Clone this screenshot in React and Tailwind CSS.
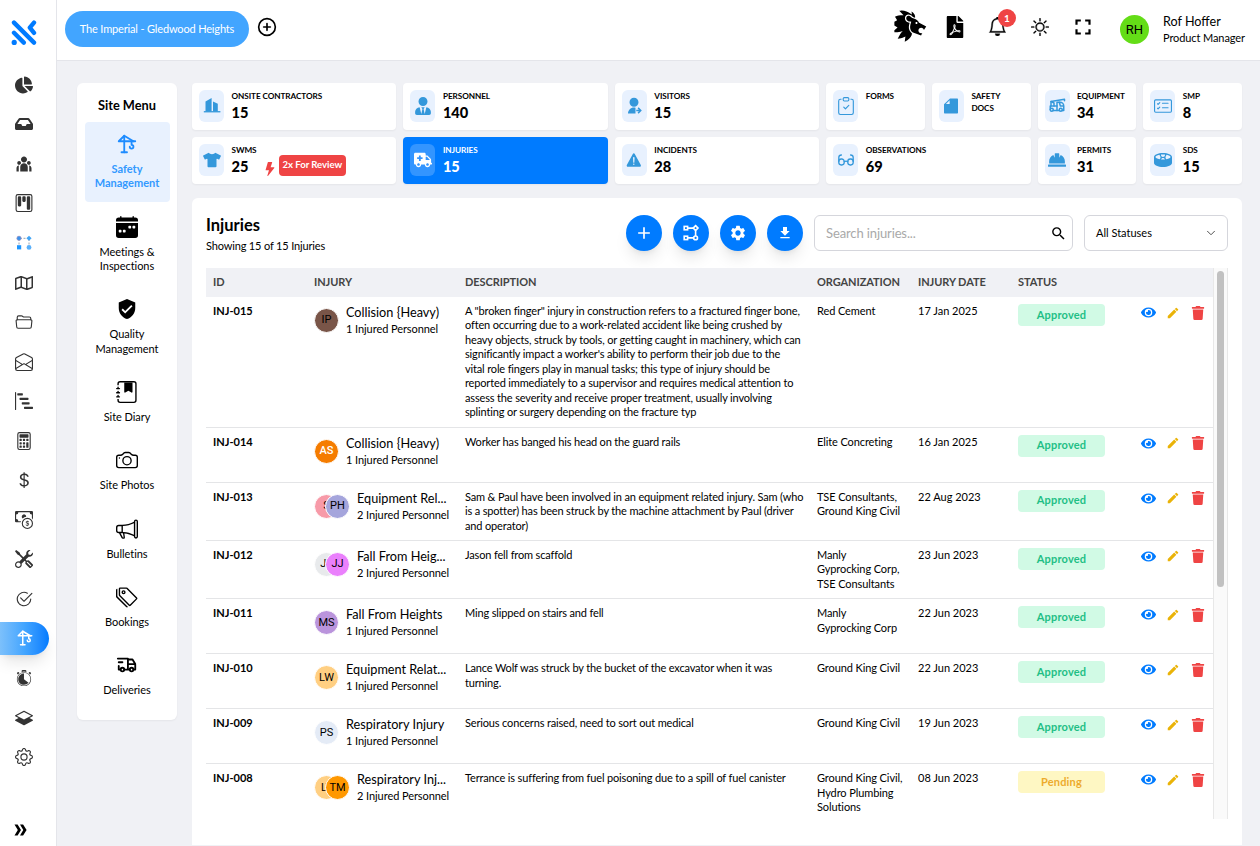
import {
  BsBell,
  BsBarChartSteps,
  BsCalculator,
  BsCalendarWeekFill,
  BsCamera,
  BsCardChecklist,
  BsCashCoin,
  BsCheck2Circle,
  BsClipboardCheck,
  BsCurrencyDollar,
  BsEnvelopeOpen,
  BsGear,
  BsJournalBookmarkFill,
  BsKanban,
  BsLayersHalf,
  BsLightningFill,
  BsMegaphone,
  BsSun,
  BsTags,
  BsTools,
} from "react-icons/bs";
import {
  FaAmbulance,
  FaChartPie,
  FaDrumSteelpan,
  FaEye,
  FaFilePdf,
  FaHardHat,
  FaInbox,
  FaRegMap,
  FaTrash,
  FaTshirt,
  FaUserTie,
} from "react-icons/fa";
import { FiChevronDown, FiPlusCircle } from "react-icons/fi";
import { GiLion, GiStopwatch } from "react-icons/gi";
import { IoFolderOpenOutline, IoWarning } from "react-icons/io5";
import { MdAdd, MdDownload, MdEdit, MdFullscreen, MdSearch, MdSettings, MdVerifiedUser } from "react-icons/md";
import { RiTeamFill, RiUserSharedFill } from "react-icons/ri";
import { TbCarCrane, TbCrane, TbTruckDelivery } from "react-icons/tb";

const Logo = () => (
  <svg width="26" height="26" viewBox="0 0 26 26" fill="none" stroke="#007bff" strokeWidth="4.4" strokeLinecap="round">
    <path d="M3 2.6 L23 22.6" />
    <path d="M3 12.8 L12.8 22.6" />
    <path d="M23 2.6 L18.8 7.6 L23 12.8" strokeLinejoin="round" />
    <path d="M3.2 22.4 L3.21 22.4" strokeWidth="5.2" />
  </svg>
);

const FlowDots = ({ size = 18 }) => (
  <svg width={size} height={size} viewBox="0 0 18 18">
    <path d="M4 5v8M14 5v8M5 4.3h8" stroke="#9aa0aa" strokeWidth="1" strokeDasharray="2 1.5" />
    <circle cx="4" cy="4.3" r="2.2" fill="#3c92ea" stroke="#b98fb4" strokeWidth="0.5" />
    <path d="M14 1.8l2.6 2.5L14 6.8l-2.6-2.5z" fill="#42a5f5" />
    <rect x="2" y="11.2" width="4.2" height="4.2" fill="#1e96ff" />
    <circle cx="14" cy="13.4" r="2.4" fill="#5ab0fa" />
  </svg>
);

const Buildings = ({ size = 18 }) => (
  <svg width={size} height={size} viewBox="0 0 18 18" fill="currentColor">
    <path d="M2.5 4.4 8.6 1V14.6H2.5z" />
    <path d="M10 4.6 14.8 6.8V14.6H10z" />
    <path d="M0.8 14.1h16.6v1.3H0.8z" />
  </svg>
);

const FoldedDoc = ({ size = 18 }) => (
  <svg width={size} height={size} viewBox="0 0 18 18" fill="currentColor">
    <path d="M8 1.4h7c.6 0 1 .4 1 1v13.2c0 .6-.4 1-1 1H3c-.6 0-1-.4-1-1V7.2z" />
    <path d="M3.9 6.9 7.6 3.2v3.7z" fill="#eaf2fe" />
  </svg>
);

const Glasses = ({ size = 18 }) => (
  <svg width={size} height={size} viewBox="0 0 18 18" fill="none" stroke="currentColor" strokeWidth="1.3" strokeLinecap="round">
    <rect x="1.8" y="8" width="5.4" height="6" rx="2.4" />
    <rect x="10.8" y="8" width="5.4" height="6" rx="2.4" />
    <path d="M7.2 10.6q1.8-1 3.6 0" />
    <path d="M1.8 10.6V6.4q0-2.4 2.6-2.4M16.2 10.6V6.4q0-2.4-2.6-2.4" />
  </svg>
);

const FlowNodes = ({ size = 18 }) => (
  <svg width={size} height={size} viewBox="0 0 18 18" fill="none" stroke="currentColor" strokeWidth="1.6">
    <rect x="2.2" y="2.4" width="3.4" height="3.4" />
    <path d="M13.6 1.6 16 4.1l-2.4 2.4-2.4-2.4z" />
    <rect x="2.2" y="12.2" width="3.4" height="3.4" />
    <circle cx="13.6" cy="13.9" r="1.9" />
    <path d="M5.6 4.1h5.6M13.6 6.5V12M5.6 13.9h6" />
  </svg>
);

const DoubleChevron = () => (
  <svg width="13" height="12" viewBox="0 0 13 12" fill="currentColor">
    <path d="M0.5 0.5H3.6L7 6 3.6 11.5H0.5L3.8 6z" />
    <path d="M6 0.5H9.1L12.6 6 9.1 11.5H6L9.3 6z" />
  </svg>
);

const railIcons = [
  FaChartPie,
  FaInbox,
  RiTeamFill,
  BsKanban,
  FlowDots,
  FaRegMap,
  IoFolderOpenOutline,
  BsEnvelopeOpen,
  BsBarChartSteps,
  BsCalculator,
  BsCurrencyDollar,
  BsCashCoin,
  BsTools,
  BsCheck2Circle,
  TbCrane,
  GiStopwatch,
  BsLayersHalf,
  BsGear,
];

const siteMenu = [
  { label: "Safety Management", icon: TbCrane, active: true },
  { label: "Meetings & Inspections", icon: BsCalendarWeekFill },
  { label: "Quality Management", icon: MdVerifiedUser },
  { label: "Site Diary", icon: BsJournalBookmarkFill },
  { label: "Site Photos", icon: BsCamera },
  { label: "Bulletins", icon: BsMegaphone },
  { label: "Bookings", icon: BsTags },
  { label: "Deliveries", icon: TbTruckDelivery },
];

const stats = [
  { label: "Onsite Contractors", value: 15, icon: Buildings, wide: true },
  { label: "Personnel", value: 140, icon: FaUserTie, wide: true },
  { label: "Visitors", value: 15, icon: RiUserSharedFill, wide: true },
  { label: "Forms", icon: BsClipboardCheck },
  { label: "Safety Docs", icon: FoldedDoc },
  { label: "Equipment", value: 34, icon: TbCarCrane },
  { label: "SMP", value: 8, icon: BsCardChecklist },
  { label: "SWMS", value: 25, icon: FaTshirt, wide: true, review: "2x For Review" },
  { label: "Injuries", value: 15, icon: FaAmbulance, wide: true, active: true },
  { label: "Incidents", value: 28, icon: IoWarning, wide: true },
  { label: "Observations", value: 69, icon: Glasses, wide: true },
  { label: "Permits", value: 31, icon: FaHardHat },
  { label: "SDS", value: 15, icon: FaDrumSteelpan },
];

const injuries = [
  {
    id: "INJ-015",
    name: "Collision {Heavy)",
    people: [["IP", "bg-[#795548] text-black"]],
    description: `A "broken finger" injury in construction refers to a fractured finger bone,
often occurring due to a work-related accident like being crushed by
heavy objects, struck by tools, or getting caught in machinery, which can
significantly impact a worker's ability to perform their job due to the
vital role fingers play in manual tasks; this type of injury should be
reported immediately to a supervisor and requires medical attention to
assess the severity and receive proper treatment, usually involving
splinting or surgery depending on the fracture typ`,
    org: "Red Cement",
    date: "17 Jan 2025",
    status: "Approved",
  },
  {
    id: "INJ-014",
    name: "Collision {Heavy)",
    people: [["AS", "bg-[#f57c00] font-medium text-white"]],
    description: "Worker has banged his head on the guard rails",
    org: "Elite Concreting",
    date: "16 Jan 2025",
    status: "Approved",
  },
  {
    id: "INJ-013",
    name: "Equipment Rel...",
    people: [["S", "bg-[#f79aa8] text-black"], ["PH", "bg-[#a5a5dc] text-black"]],
    description: `Sam & Paul have been involved in an equipment related injury. Sam (who
is a spotter) has been struck by the machine attachment by Paul (driver
and operator)`,
    org: "TSE Consultants,\nGround King Civil",
    date: "22 Aug 2023",
    status: "Approved",
  },
  {
    id: "INJ-012",
    name: "Fall From Heig...",
    people: [["JT", "bg-[#e8eaec] text-black"], ["JJ", "bg-[#ea80fc] text-black"]],
    description: "Jason fell from scaffold",
    org: "Manly\nGyprocking Corp,\nTSE Consultants",
    date: "23 Jun 2023",
    status: "Approved",
  },
  {
    id: "INJ-011",
    name: "Fall From Heights",
    people: [["MS", "bg-[#ba94dc] text-black"]],
    description: "Ming slipped on stairs and fell",
    org: "Manly\nGyprocking Corp",
    date: "22 Jun 2023",
    status: "Approved",
  },
  {
    id: "INJ-010",
    name: "Equipment Relat...",
    people: [["LW", "bg-[#ffcf82] text-black"]],
    description: "Lance Wolf was struck by the bucket of the excavator when it was\nturning.",
    org: "Ground King Civil",
    date: "22 Jun 2023",
    status: "Approved",
  },
  {
    id: "INJ-009",
    name: "Respiratory Injury",
    people: [["PS", "bg-[#e4ebf6] text-black"]],
    description: "Serious concerns raised, need to sort out medical",
    org: "Ground King Civil",
    date: "19 Jun 2023",
    status: "Approved",
  },
  {
    id: "INJ-008",
    name: "Respiratory Inj...",
    people: [["LT", "bg-[#ffcf82] text-black"], ["TM", "bg-[#ff9800] text-black"]],
    description: "Terrance is suffering from fuel poisoning due to a spill of fuel canister",
    org: "Ground King Civil,\nHydro Plumbing\nSolutions",
    date: "08 Jun 2023",
    status: "Pending",
  },
];

const columns = "grid grid-cols-[101px_151px_352px_101px_100px_202px]";

function Rail() {
  return (
    <aside className="flex w-[57px] shrink-0 flex-col border-r border-[#e4e5ea] bg-white">
      <div className="mt-5 ml-[11px] h-[45px]">
        <Logo />
      </div>
      <nav className="flex flex-col">
        {railIcons.map((Icon, i) =>
          Icon === TbCrane ? (
            <a key={i} className="flex h-[39.55px] items-center">
              <span className="flex h-[33px] w-[49px] items-center justify-center rounded-r-full bg-linear-to-r from-[#7cc0fb] via-[#42a5ff] to-[#007bff] text-white shadow-lg shadow-black/10">
                <Icon size={18} />
              </span>
            </a>
          ) : (
            <a key={i} className="flex h-[39.55px] w-12 items-center justify-center text-[#333]">
              <Icon size={18} />
            </a>
          )
        )}
      </nav>
      <button className="mt-auto mb-[10px] ml-[14px]">
        <DoubleChevron />
      </button>
    </aside>
  );
}

function Header() {
  return (
    <header className="flex h-[61px] shrink-0 items-start border-b border-[#e4e5ea] bg-white pl-2">
      <button className="mt-[11px] h-9 w-[184px] rounded-full bg-[#42a5ff] text-[11px] tracking-[-0.16px] text-white">
        The Imperial - Gledwood Heights
      </button>
      <FiPlusCircle size={20} className="mt-[17px] ml-2" />
      <div className="ml-auto flex h-[53px] items-center pr-[14px]">
        <GiLion size={35} />
        <FaFilePdf size={22} className="mr-[-3px] ml-[16px]" />
        <div className="relative ml-[25px]">
          <BsBell size={19} strokeWidth={0.3} />
          <span className="absolute -top-[8px] left-[10px] flex size-[18px] items-center justify-center rounded-full bg-[#ef4444] text-[10px] font-bold text-white">
            1
          </span>
        </div>
        <BsSun size={18} strokeWidth={0.3} className="ml-[24px]" />
        <MdFullscreen size={26} className="ml-[21px]" />
        <div className="mt-[6px] ml-[24px] flex size-[29px] items-center justify-center rounded-full bg-[#64dd17] font-[Roboto] text-[13px]">
          RH
        </div>
        <div className="mt-[6px] ml-[14px] w-[83px] whitespace-nowrap">
          <p className="text-[12.6px] leading-[17px]">Rof Hoffer</p>
          <p className="text-[11px] leading-[16px] tracking-[-0.1px]">Product Manager</p>
        </div>
      </div>
    </header>
  );
}

function SiteMenu() {
  return (
    <section className="flex h-[637px] w-[100px] shrink-0 flex-col rounded-md bg-white px-[7.5px] pt-[14px] shadow-xs">
      <h2 className="mb-2 text-center text-[12.8px] leading-[17px] font-bold">Site Menu</h2>
      <div className="flex flex-col gap-[2.9px]">
        {siteMenu.map(({ label, icon: Icon, active }) => (
          <a
            key={label}
            className={`flex flex-col items-center rounded py-[11px] text-center text-[11px] leading-[14.4px] ${
              active ? "bg-[#e8f1fe] font-bold text-[#3399ff]" : "tracking-[-0.05px]"
            }`}
          >
            <Icon size={22} className={active ? "text-[#1e8cff]" : "text-black"} />
            <span className="mt-[7px] w-[76px]">{label}</span>
          </a>
        ))}
      </div>
    </section>
  );
}

function StatCard({ label, value, icon: Icon, wide, active, review }) {
  return (
    <div
      className={`flex h-[47px] rounded p-[7px] shadow-xs ${wide ? "col-span-2" : ""} ${
        active ? "bg-[#007bff] text-white" : "bg-white"
      }`}
    >
      <div
        className={`flex h-8 w-[25px] shrink-0 items-center justify-center rounded-md ${
          active ? "bg-[#3395ff] text-white" : "bg-[#e8f1fe] text-[#3498db]"
        }`}
      >
        <Icon size={18} />
      </div>
      <div className="ml-[7.5px]">
        <p className="text-[8.2px] leading-[12px] font-bold tracking-[-0.07px] uppercase">{label}</p>
        {value && <p className="mt-[2px] text-[14.6px] leading-[18px] font-black">{value}</p>}
      </div>
      {review && (
        <div className="mt-[11px] ml-[4px] flex items-start">
          <BsLightningFill size={14} className="mt-[7px] mr-[2px] ml-[2px] text-[#ef4444]" />
          <span className="flex h-[21px] items-center rounded bg-[#ef4444] px-1 text-[9.6px] font-bold tracking-[-0.05px] whitespace-nowrap text-white">
            {review}
          </span>
        </div>
      )}
    </div>
  );
}

function Toolbar() {
  return (
    <div className="flex h-9 items-center">
      <div>
        <h1 className="mt-[3px] text-[16.5px] leading-[20px] font-bold">Injuries</h1>
        <p className="mt-[2px] text-[11px] leading-[17px] tracking-[-0.16px]">Showing 15 of 15 Injuries</p>
      </div>
      <div className="ml-auto flex gap-[11px]">
        {[MdAdd, FlowNodes, MdSettings, MdDownload].map((Icon, i) => (
          <button
            key={i}
            className="flex size-9 items-center justify-center rounded-full bg-[#007bff] text-white shadow-lg shadow-black/10"
          >
            <Icon size={i === 0 ? 20 : i === 3 ? 16 : 18} />
          </button>
        ))}
      </div>
      <div className="ml-[11px] flex h-9 w-[259px] items-center rounded-md border border-[#d5d6dc] pr-[5px] pl-[11px]">
        <input
          placeholder="Search injuries..."
          className="w-full pt-px text-[13px] tracking-[-0.12px] outline-none placeholder:text-[#a9a9a9]"
        />
        <MdSearch size={17} className="shrink-0" />
      </div>
      <div className="ml-[11px] flex h-9 w-[144px] items-center justify-between rounded-md border border-[#d5d6dc] pr-[9px] pl-[11px] text-[11px]">
        All Statuses
        <FiChevronDown size={14} strokeWidth={1.6} className="text-[#444]" />
      </div>
    </div>
  );
}

function InjuryRow({ id, name, people, description, org, date, status }) {
  return (
    <div className={`${columns} min-h-[55px] border-b border-[#e4e5e7] text-[11px] leading-[14.45px] *:px-[7px] *:pt-[7px]`}>
      <div className="font-bold">{id}</div>
      <div className="flex items-start">
        <div className="mt-[4px] flex">
          {people.map(([initials, color], i) => (
            <span
              key={initials}
              className={`flex size-[25px] shrink-0 items-center justify-center rounded-full border border-white font-[Roboto] text-[11px] ${color} ${
                i > 0 ? "-ml-[14px]" : ""
              }`}
            >
              {initials}
            </span>
          ))}
        </div>
        <div className="ml-[7px] whitespace-nowrap">
          <p className="text-[12.7px] leading-[17px]">{name}</p>
          <p className="text-[11px] leading-[16px] tracking-[-0.07px]">{people.length} Injured Personnel</p>
        </div>
      </div>
      <div className="pb-[7px] tracking-[-0.155px] whitespace-pre">{description}</div>
      <div className="pb-[7px] tracking-[-0.1px] whitespace-pre">{org}</div>
      <div>{date}</div>
      <div className="flex items-start">
        <span
          className={`flex h-[22px] w-[87px] items-center justify-center rounded font-bold tracking-[0.2px] ${
            status === "Approved" ? "bg-[#d1fae5] text-[#1fbf85]" : "bg-[#fef7c3] text-[#edab2d]"
          }`}
        >
          {status}
        </span>
        <div className="mt-px mr-px ml-auto flex items-center">
          <FaEye size={15} className="mr-[10px] text-[#007bff]" />
          <MdEdit size={14} className="mr-[11px] text-[#eab308]" />
          <FaTrash size={14} className="text-[#ef4444]" />
        </div>
      </div>
    </div>
  );
}

function InjuryTable() {
  return (
    <div className="mt-[17px] flex h-[551px] overflow-hidden">
      <div className="w-[1007px] shrink-0">
        <div className={`${columns} h-[29px] items-center bg-[#f0f1f5] text-[11px] font-bold tracking-[-0.08px] text-[#444] *:px-[7px]`}>
          <span>ID</span>
          <span>INJURY</span>
          <span>DESCRIPTION</span>
          <span>ORGANIZATION</span>
          <span>INJURY DATE</span>
          <span>STATUS</span>
        </div>
        {injuries.map((row) => (
          <InjuryRow key={row.id} {...row} />
        ))}
      </div>
      <div className="w-[15px] border-x border-[#e8e8e8] bg-[#fafafa] px-[3px] pt-[3px]">
        <div className="h-[316px] rounded-full bg-[#c1c1c1]" />
      </div>
    </div>
  );
}

export default function App() {
  return (
    <div className="flex h-[846px] overflow-hidden bg-[#f0f1f5] font-[Lato,sans-serif] text-black">
      <Rail />
      <div className="flex min-w-0 flex-1 flex-col">
        <Header />
        <main className="flex min-h-0 flex-1 gap-[15px] pt-[22px] pr-[18px] pl-5">
          <SiteMenu />
          <div className="flex w-[1050px] flex-col">
            <div className="grid grid-cols-10 gap-[7px]">
              {stats.map((s) => (
                <StatCard key={s.label} {...s} />
              ))}
            </div>
            <section className="mt-[14px] h-[647px] rounded-t-md bg-white px-[14px] pt-[17px]">
              <Toolbar />
              <InjuryTable />
            </section>
          </div>
        </main>
      </div>
    </div>
  );
}
